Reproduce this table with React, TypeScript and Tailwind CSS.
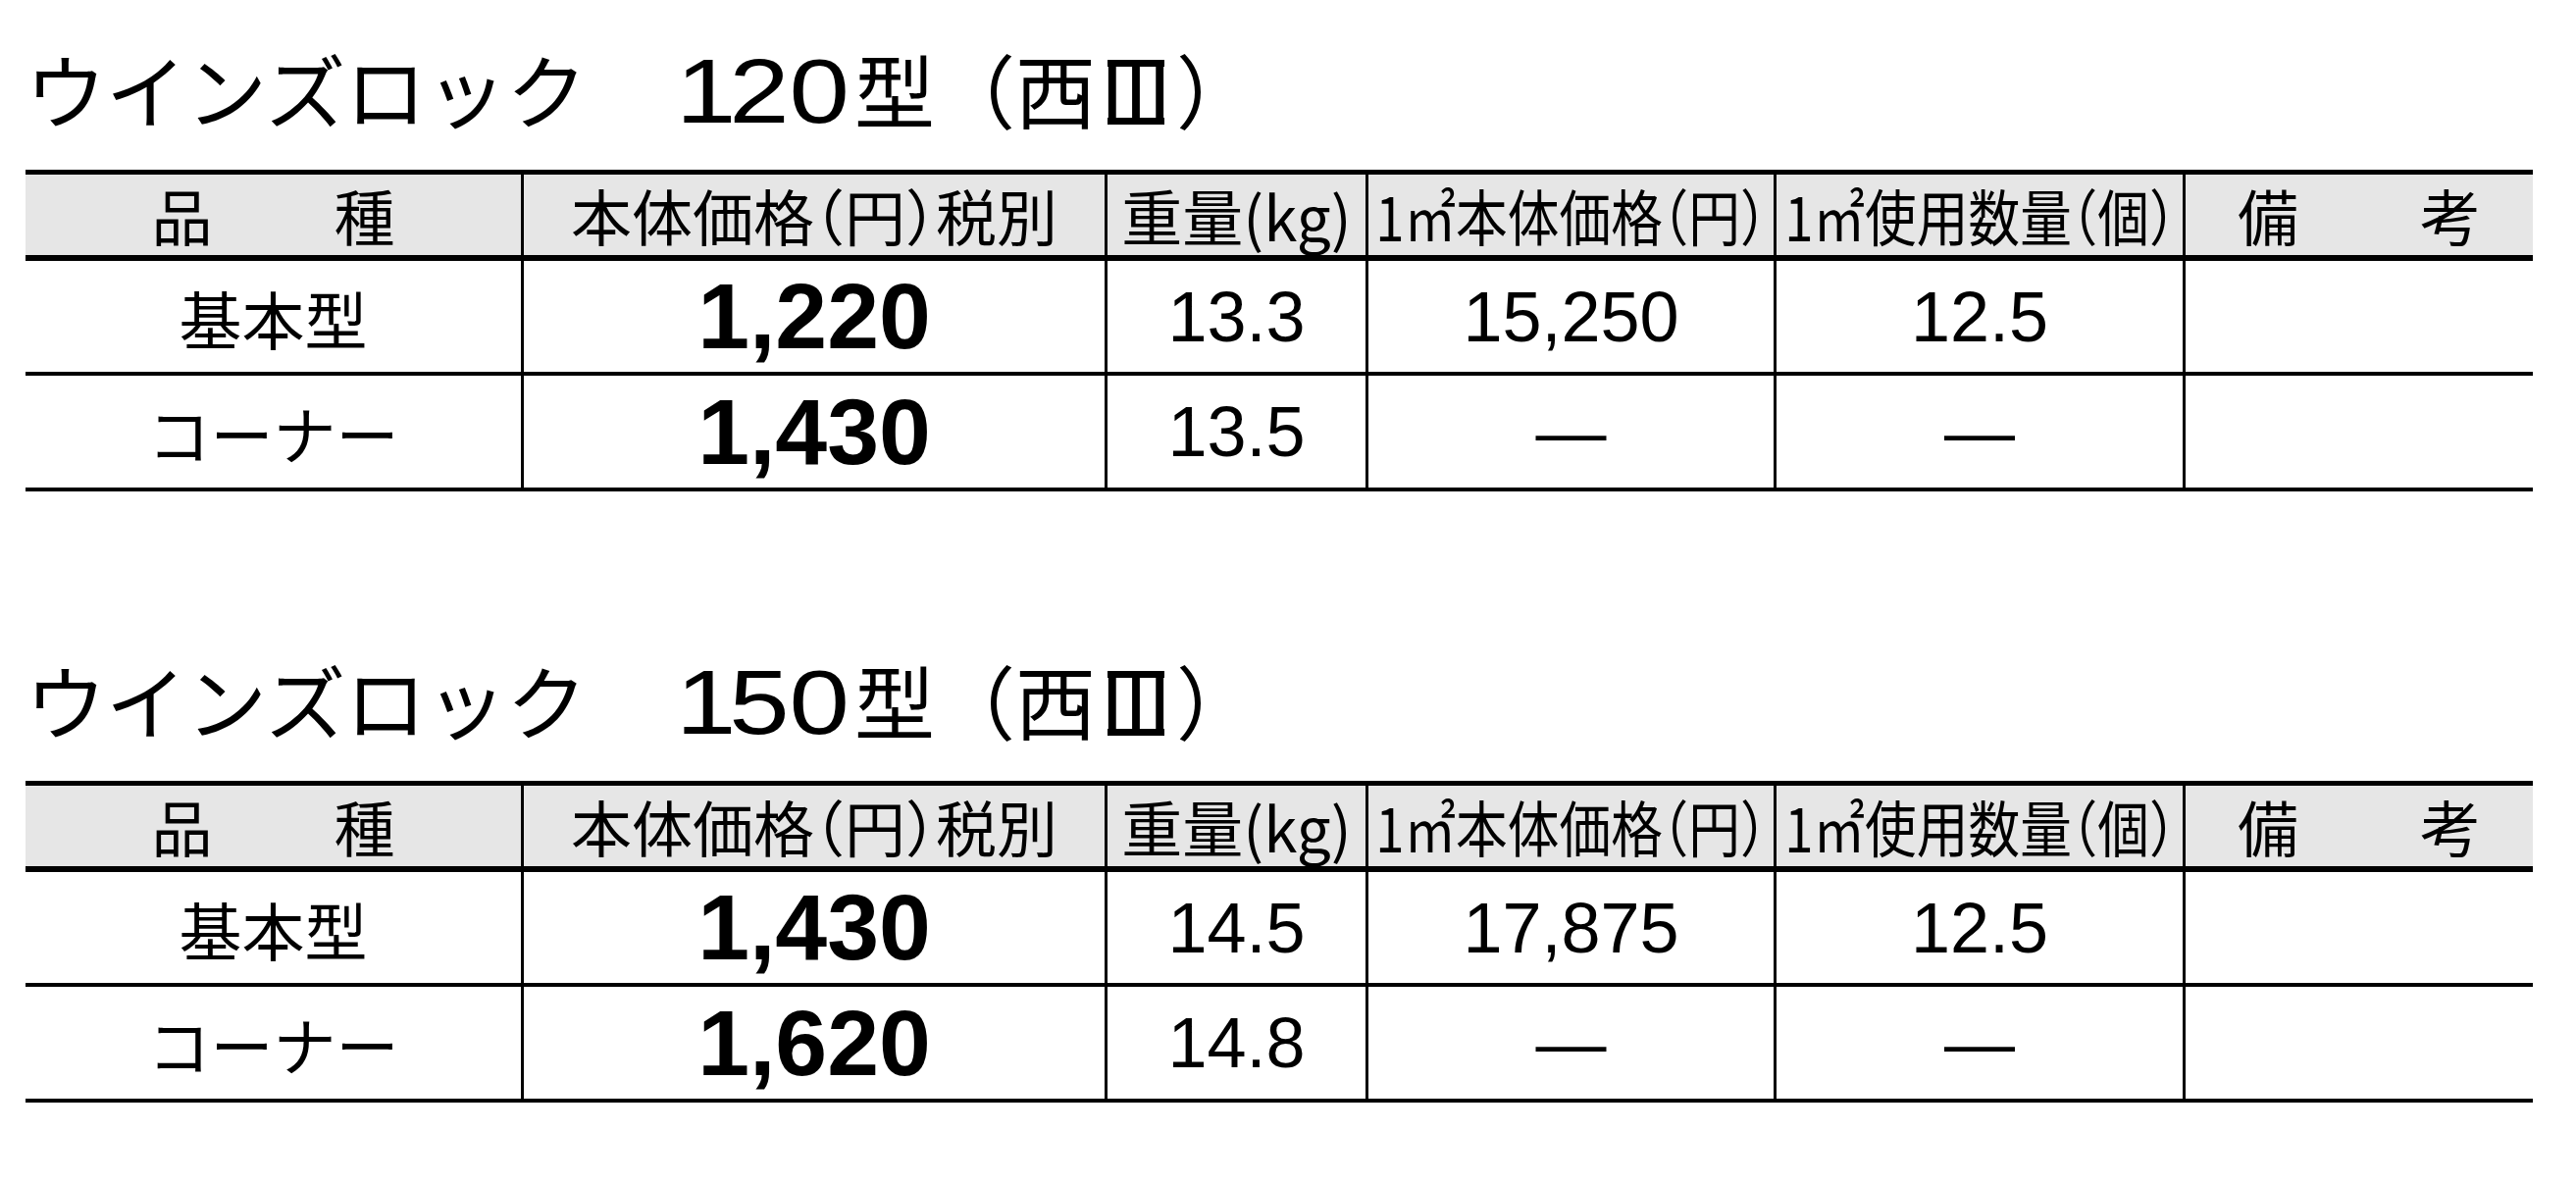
const jp = "font-['Noto_Sans_CJK_JP',sans-serif]";
const num = "font-['Liberation_Sans',sans-serif]";

type Row = { name: string; price: string; weight: string; perM2: string; qty: string };

const tables: { size: string; rows: Row[] }[] = [
  {
    size: '120',
    rows: [
      { name: '基本型', price: '1,220', weight: '13.3', perM2: '15,250', qty: '12.5' },
      { name: 'コーナー', price: '1,430', weight: '13.5', perM2: '—', qty: '—' },
    ],
  },
  {
    size: '150',
    rows: [
      { name: '基本型', price: '1,430', weight: '14.5', perM2: '17,875', qty: '12.5' },
      { name: 'コーナー', price: '1,620', weight: '14.8', perM2: '—', qty: '—' },
    ],
  },
];

const grid = 'grid grid-cols-[508px_595px_266px_416px_417px_354px]';
const cell = 'flex items-center justify-center overflow-visible border-r-[3px] border-black';
const lastCell = 'flex items-center justify-center overflow-visible';

function Title({ size }: { size: string }) {
  return (
    <div className={`h-[82px] text-[82px] leading-[82px] whitespace-nowrap text-black ${jp}`}>
      {'ウインズロック\u3000'}
      <span className={`ml-[9px] mr-[34px] inline-block origin-left scale-x-[1.2] text-[92px] ${num}`}>
        <span className="tracking-[-6px]">{size[0]}</span>
        {size.slice(1)}
      </span>
      {'型（西'}
      <span className="relative inline-block before:absolute before:top-[12px] before:left-[12px] before:right-[12px] before:h-[7px] before:bg-black after:absolute after:top-[71px] after:left-[12px] after:right-[12px] after:h-[7px] after:bg-black">
        Ⅲ
      </span>
      {'）'}
    </div>
  );
}

function Header() {
  return (
    <div className={`${grid} h-[88px] border-b-[6px] border-black bg-[#e6e6e6] text-[62px] leading-none text-black ${jp}`}>
      <div className={cell}>{'品\u3000\u3000種'}</div>
      <div className={cell}>
        <span className="whitespace-nowrap [font-feature-settings:'halt']">本体価格（円）税別</span>
      </div>
      <div className={cell}>
        <span className="whitespace-nowrap">重量(kg)</span>
      </div>
      <div className={cell}>
        <span className="inline-block shrink-0 scale-x-[0.85] whitespace-nowrap [font-feature-settings:'halt']">
          1㎡本体価格（円）
        </span>
      </div>
      <div className={cell}>
        <span className="inline-block shrink-0 scale-x-[0.85] whitespace-nowrap [font-feature-settings:'halt']">
          1㎡使用数量（個）
        </span>
      </div>
      <div className={lastCell}>{'備\u3000\u3000考'}</div>
    </div>
  );
}

function BodyRow({ row, last }: { row: Row; last: boolean }) {
  return (
    <div className={`${grid} ${last ? 'h-[114px]' : 'h-[117px] border-b-[4px] border-black'} leading-none text-black`}>
      <div className={`${cell} text-[64px] ${jp}`}>{row.name}</div>
      <div className={`${cell} text-[95px] font-bold ${num}`}>{row.price}</div>
      <div className={`${cell} text-[72px] ${num}`}>{row.weight}</div>
      <div className={`${cell} text-[72px] ${num}`}>{row.perM2}</div>
      <div className={`${cell} text-[72px] ${num}`}>{row.qty}</div>
      <div className={lastCell} />
    </div>
  );
}

function PriceTable({ size, rows }: { size: string; rows: Row[] }) {
  return (
    <div>
      <Title size={size} />
      <div className="mt-[42px] w-[2556px] border-t-[5px] border-b-[4px] border-black">
        <Header />
        {rows.map((r, i) => (
          <BodyRow key={r.name} row={r} last={i === rows.length - 1} />
        ))}
      </div>
    </div>
  );
}

export default function App() {
  return (
    <div className="h-[1206px] w-[2626px] overflow-hidden bg-white pl-[26px] pt-[49px]">
      <div className="flex flex-col gap-[171px]">
        {tables.map((t) => (
          <PriceTable key={t.size} size={t.size} rows={t.rows} />
        ))}
      </div>
    </div>
  );
}
